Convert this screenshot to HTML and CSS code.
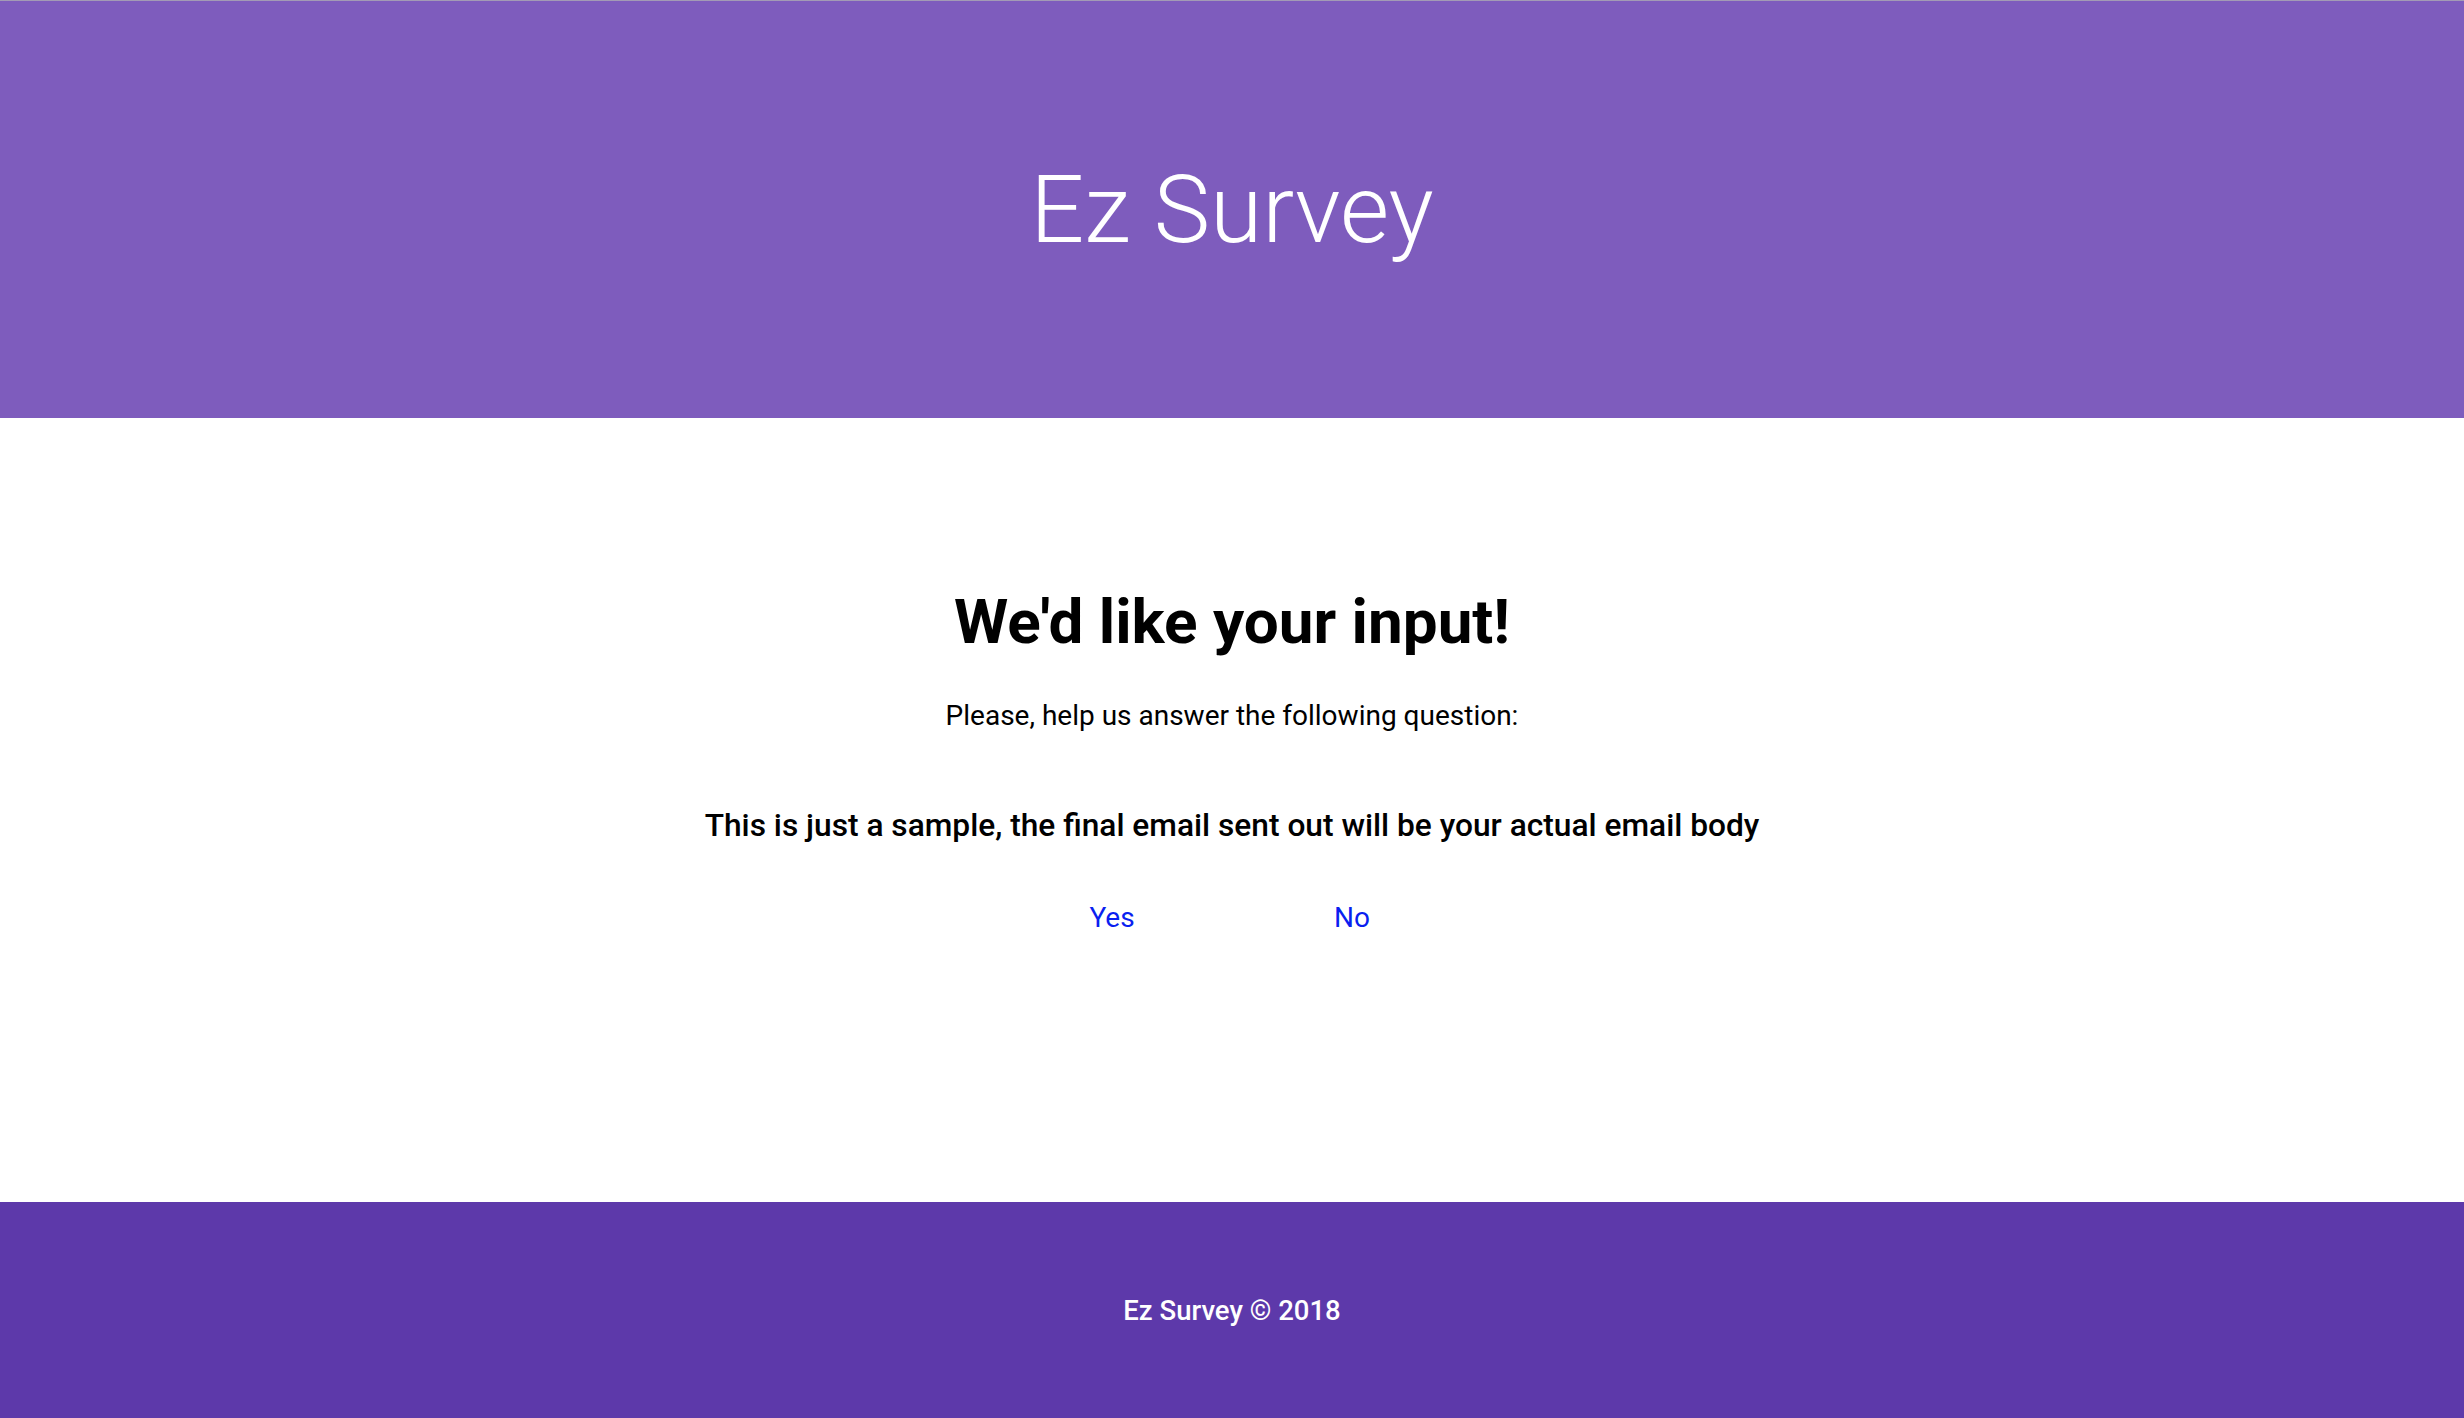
FILE: index.html
```html
<!DOCTYPE html>
<html lang="en">
<head>
<meta charset="utf-8">
<title>Ez Survey</title>
<link rel="stylesheet" href="styles.css">
</head>
<body>
<div class="page">
  <header class="hero">
    <h1 class="brand">Ez Survey</h1>
  </header>
  <main class="content">
    <h2 class="headline">We'd like your input!</h2>
    <p class="lead">Please, help us answer the following question:</p>
    <p class="question">This is just a sample, the final email sent out will be your actual email body</p>
    <div class="answers">
      <a class="answer" href="#">Yes</a>
      <a class="answer" href="#">No</a>
    </div>
  </main>
  <footer class="footer">
    <p class="copy">Ez Survey © 2018</p>
  </footer>
</div>
</body>
</html>
```

FILE: styles.css
```css
html, body {
  margin: 0;
  padding: 0;
  background: #ffffff;
}
body {
  font-family: Roboto, "Liberation Sans", sans-serif;
  color: #000;
}
.page {
  display: flex;
  flex-direction: column;
  height: 1418px;
}
.hero {
  height: 417px;
  border-top: 1px solid #a39bb5;
  background: #7e5cbd;
  display: flex;
  align-items: center;
  justify-content: center;
}
.brand {
  margin: 0;
  font-weight: 300;
  font-size: 95px;
  color: #ffffff;
  letter-spacing: 0;
}
.content {
  flex: 1;
  display: flex;
  flex-direction: column;
  align-items: center;
  padding-top: 171px;
  box-sizing: border-box;
}
.headline {
  margin: 0;
  font-size: 62px;
  font-weight: 700;
  line-height: 66px;
}
.lead {
  margin: 45px 0 0;
  font-size: 28px;
  line-height: 32px;
}
.question {
  margin: 76px 0 0;
  font-size: 31.7px;
  font-weight: 500;
  line-height: 36px;
}
.answers {
  margin-top: 58px;
  display: grid;
  grid-template-columns: 240px 240px;
}
.answer {
  text-align: center;
  color: #0a1ff0;
  text-decoration: none;
  font-size: 28px;
  line-height: 32px;
}
.footer {
  height: 216px;
  background: #5d39aa;
  display: flex;
  align-items: center;
  justify-content: center;
}
.copy {
  margin: 0;
  color: #ffffff;
  font-size: 27.5px;
  font-weight: 500;
}
```
